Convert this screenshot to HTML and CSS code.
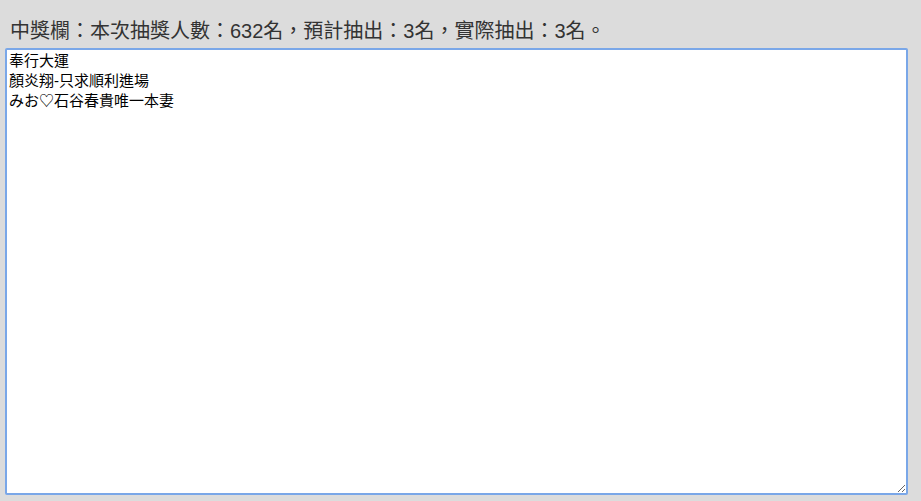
FILE: index.html
```html
<!DOCTYPE html>
<html lang="zh-Hant">
<head>
<meta charset="utf-8">
<link rel="stylesheet" href="styles.css">
</head>
<body>
<div class="page">
  <div class="title">中獎欄：本次抽獎人數：632名，預計抽出：3名，實際抽出：3名。</div>
  <textarea class="winners" spellcheck="false">奉行大運
顏炎翔-只求順利進場
みお♡石谷春貴唯一本妻</textarea>
</div>
</body>
</html>
```
FILE: styles.css
```css
html, body {
  margin: 0;
  padding: 0;
  background: #dcdcdc;
}
.page {
  display: flex;
  flex-direction: column;
  padding: 19px 0 0 5px;
}
.title {
  font-family: "Liberation Sans", "Noto Sans CJK TC", sans-serif;
  font-size: 20px;
  font-weight: 400;
  line-height: 24px;
  color: #333;
  padding-left: 5px;
  margin-bottom: 5px;
}
.winners {
  box-sizing: border-box;
  width: 903px;
  height: 447px;
  margin: 0;
  padding: 1px 2px;
  border: 2px solid #7aa7e8;
  border-radius: 2px;
  outline: none;
  background: #fff;
  color: #000;
  font-family: "Liberation Sans", "Noto Sans CJK TC", sans-serif;
  font-size: 15px;
  font-weight: 400;
  line-height: 20px;
  resize: both;
}
```
